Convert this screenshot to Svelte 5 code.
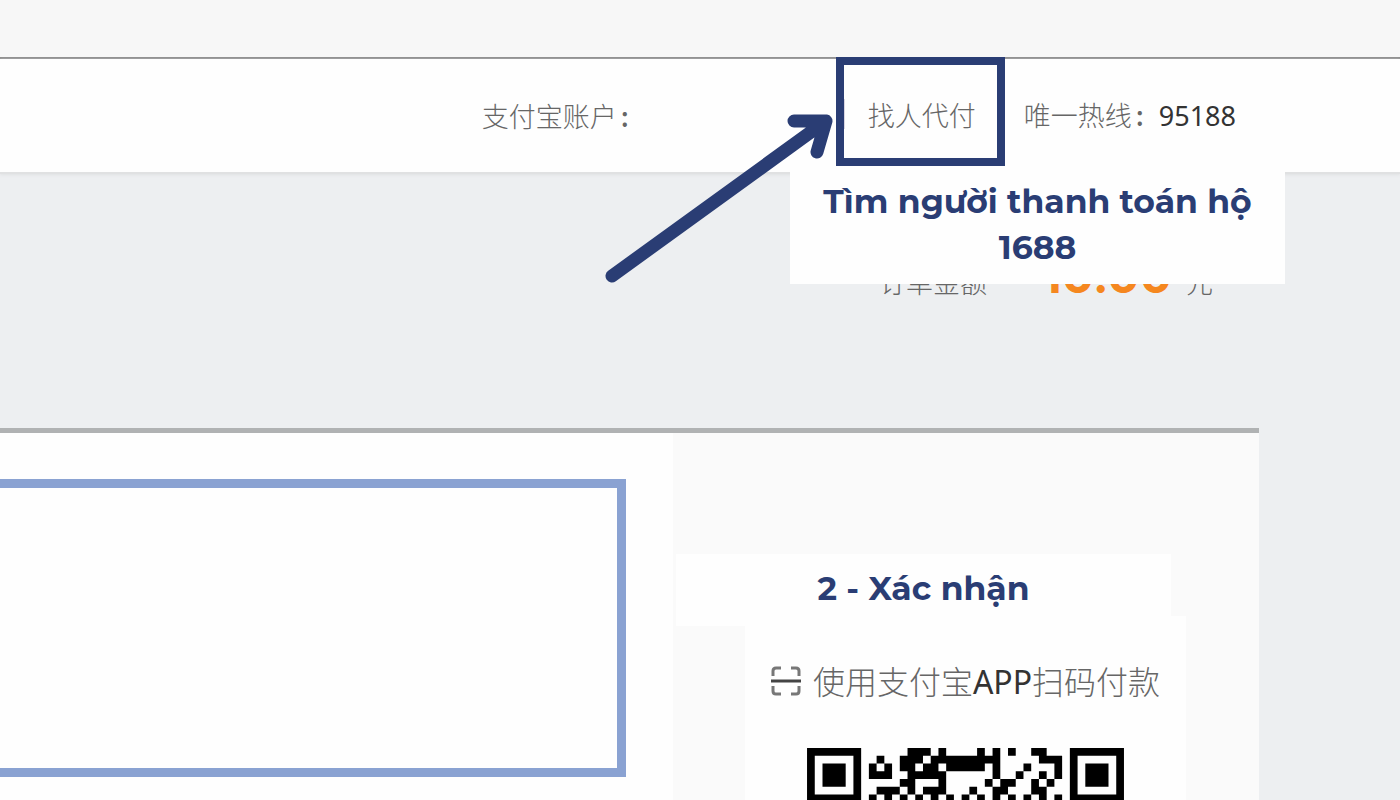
<script lang="ts">
	const account = '';
	const hotline = '95188';
	const amount = '10.00';

	// upper rows of the payment code, # is a dark module
	const rows = [
		'#######......###.#....#.#.#..##...#######',
		'#.....#..#..###.#########.....###.#.....#',
		'#.###.#.#.#.##.##.#####.#...#...#.#.###.#',
		'#.###.#.###..#####......#..#..#.#.#.###.#',
		'#.###.#.....##...#.....#.##..#.#..#.###.#',
		'#.....#..###.#.###...#..##...##...#.....#',
		'#######.#.#.#.#.#.#.#.#.#.#.#.#.#.#######'
	];

	const code = rows
		.map((row, y) =>
			[...row.matchAll(/#+/g)].map((m) => `M${m.index} ${y}h${m[0].length}v1h-${m[0].length}z`).join('')
		)
		.join('');
</script>

<div class="page">
	<div class="topbar"></div>

	<header>
		<span class="account">支付宝账户<b>:</b>{account}</span>
		<a class="proxy" href="#proxy">
			找人代付
			<svg class="arrow" viewBox="0 0 228 172" aria-hidden="true">
				<path d="M7 163 221 8M189 8H221L212 39" />
			</svg>
		</a>
		<span class="hotline">唯一热线<b>:</b><span class="number">{hotline}</span></span>
		<p class="note callout">Tìm người thanh toán hộ 1688</p>
	</header>

	<section class="order">
		<span>订单金额</span>
		<strong>{amount}</strong>
		<span>元</span>
	</section>

	<main>
		<div class="detail">
			<div class="frame"></div>
		</div>
		<div class="pay">
			<h2 class="note">2 - Xác nhận</h2>
			<div class="scan">
				<p>
					<svg class="scan-icon" viewBox="0 0 30 30" aria-hidden="true">
						<path class="corner" d="M2 10V5q0-3 3-3h5M20 2h5q3 0 3 3v5M28 20v5q0 3-3 3h-5M10 28H5q-3 0-3-3v-5" />
						<path d="M0 15H30" />
					</svg>
					<span>使用支付宝<span class="app">APP</span>扫码付款</span>
				</p>
				<svg class="code" viewBox="0 0 41 7" role="img" aria-label="QR">
					<path d={code} />
				</svg>
			</div>
		</div>
	</main>
</div>

<style>
	:global(body) {
		margin: 0;
		background: #edeff1;
	}

	.page {
		display: flex;
		flex-direction: column;
		height: 100vh;
		overflow: hidden;
		color: #666;
		font-family: 'Noto Sans CJK SC', sans-serif;
		font-size: 27px;
		font-weight: 300;
		line-height: 40px;
	}

	.topbar {
		flex: none;
		height: 57px;
		background: #f7f7f7;
		border-bottom: 2px solid #8e8e8e;
	}

	header {
		position: relative;
		z-index: 1;
		flex: none;
		display: flex;
		align-items: center;
		justify-content: flex-end;
		height: 113px;
		padding-right: 164px;
		background: #fefefe;
		border-bottom: 2px solid #e0e1e2;
		box-shadow: 0 1px 3px #dfe1e3;
	}

	b {
		display: inline-block;
		width: 27px;
		box-sizing: border-box;
		padding-left: 4px;
		font-weight: 500;
	}

	.account {
		margin-right: 192px;
	}

	.proxy {
		position: relative;
		box-sizing: border-box;
		width: 169px;
		height: 109px;
		margin: -8px 19px 0 0;
		padding: 30px 0 0 24px;
		border: 8px solid #2a3d74;
		color: inherit;
		text-decoration: none;
	}

	.proxy::before {
		content: '';
		position: absolute;
		left: 0;
		top: 34px;
		width: 1px;
		height: 30px;
		background: #d9d6e2;
	}

	.arrow {
		position: absolute;
		left: -239px;
		top: 48px;
		width: 228px;
		height: 172px;
		fill: none;
		stroke: #2a3d74;
		stroke-width: 13;
		stroke-linecap: round;
		stroke-linejoin: round;
	}

	.number,
	.app {
		color: #333;
		font-family: 'Noto Sans', sans-serif;
		font-weight: 400;
	}

	.note {
		margin: 0;
		background: #fefefe;
		color: #2a3d74;
		font-family: Montserrat, Inter, sans-serif;
		font-size: 33px;
		font-weight: 700;
		line-height: 46px;
		text-align: center;
	}

	.callout {
		position: absolute;
		right: 115px;
		top: 107px;
		box-sizing: border-box;
		width: 495px;
		padding: 12px 24px 14px;
	}

	.order {
		flex: none;
		display: flex;
		align-items: baseline;
		justify-content: flex-end;
		box-sizing: border-box;
		height: 254px;
		padding: 82px 187px 0 0;
	}

	.order strong {
		margin: 0 14px 0 54px;
		color: #f5871f;
		font-family: Inter, sans-serif;
		font-size: 48px;
		font-weight: 700;
	}

	main {
		flex: 1;
		display: flex;
		margin-right: 141px;
		border-top: 5px solid #b0b2b3;
	}

	.detail {
		flex: 1;
		padding: 46px 47px 0 0;
		background: #fefefe;
	}

	.frame {
		box-sizing: border-box;
		height: 298px;
		border: 9px solid #8aa2d2;
		border-left: 0;
	}

	.pay {
		flex: none;
		box-sizing: border-box;
		width: 586px;
		padding: 121px 72px 0 3px;
		background: #fafafa;
	}

	.pay .note {
		width: 495px;
		padding: 11px 0 15px;
	}

	.scan {
		box-sizing: border-box;
		width: 441px;
		height: 240px;
		margin: -10px 0 0 69px;
		padding-top: 44px;
		background: #fefefe;
	}

	.scan p {
		display: flex;
		align-items: center;
		justify-content: center;
		gap: 12px;
		margin: 0 0 46px;
		font-size: 32px;
	}

	.scan-icon {
		width: 30px;
		height: 30px;
		fill: none;
		stroke: #444;
		stroke-width: 3;
	}

	.corner {
		stroke: #777;
	}

	.app {
		font-size: 32px;
	}

	.code {
		display: block;
		width: 317px;
		margin: 0 auto;
	}
</style>
